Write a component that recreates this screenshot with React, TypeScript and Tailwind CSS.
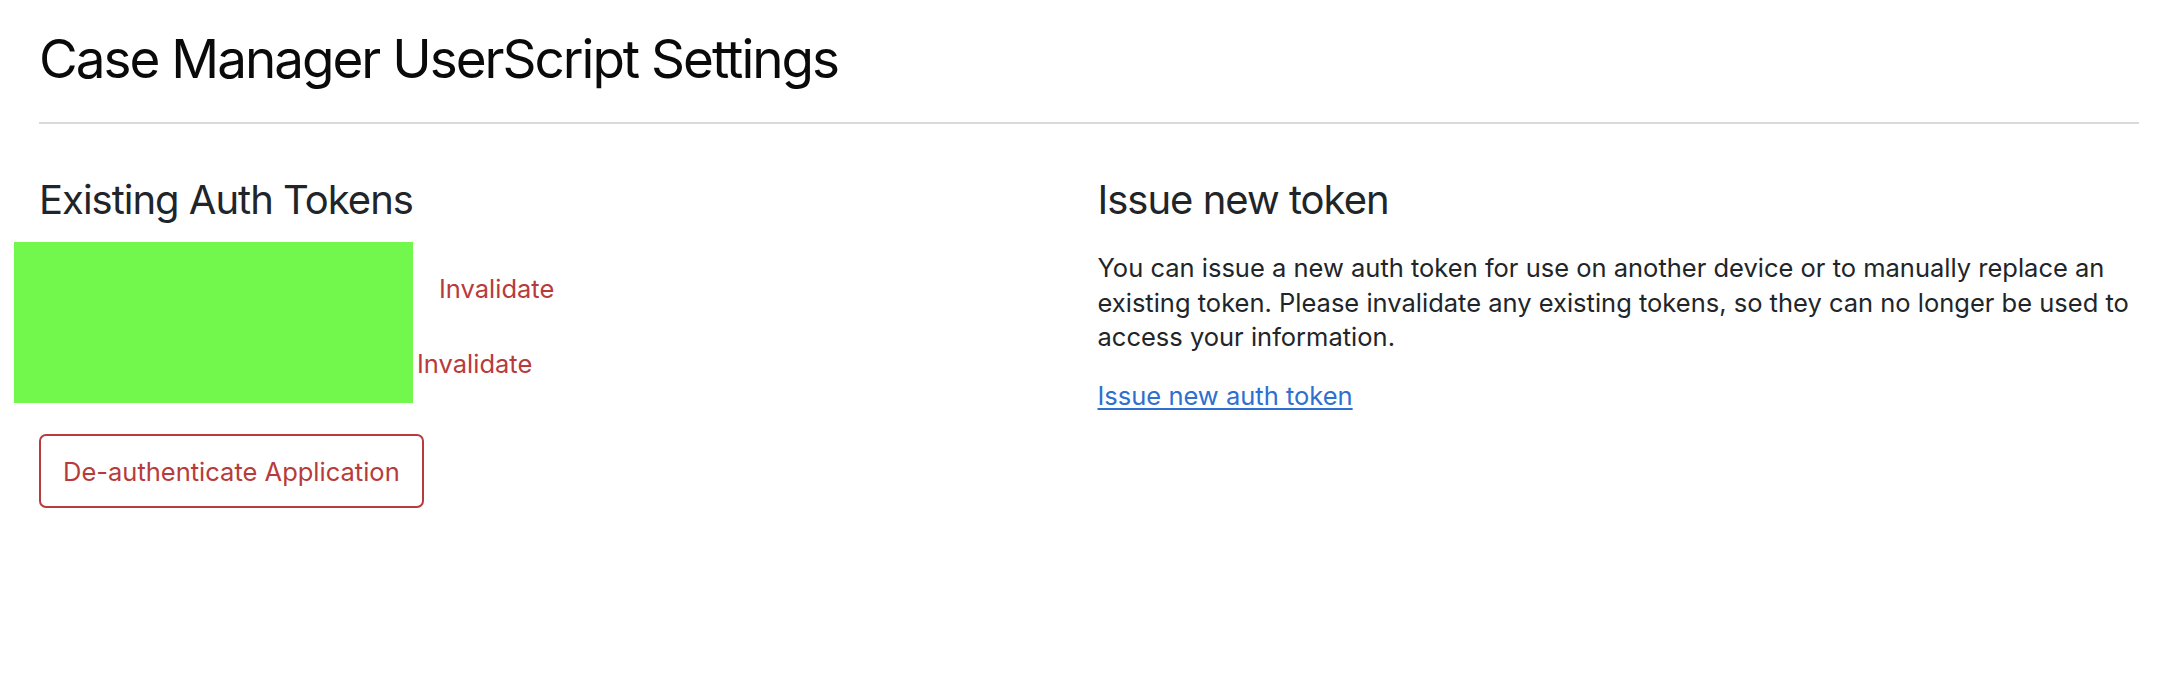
export default function App() {
  return (
    <div className="min-h-screen bg-white pl-[39px] pr-[37px] pt-[33px] font-['Inter',sans-serif] text-[#212529]">
      <h1 className="text-[53px] leading-none tracking-[-2px] text-[#0a0a0a]">Case Manager UserScript Settings</h1>
      <div className="mt-[36px] h-[2px] bg-[#dadada]" />

      <div className="grid grid-cols-2 gap-[17px] text-[25.5px] leading-[34.5px]">
        {/* Existing tokens */}
        <div>
          <h3 className="mt-[56px] text-[40px] leading-none tracking-[-1px]">Existing Auth Tokens</h3>
          <div className="relative mt-[22px] pt-[30px]">
            <div className="absolute left-[-25px] top-0 h-[161px] w-[399px] bg-[#72f74c]" />
            <div className="flex flex-col gap-[40.5px]">
              <div className="flex">
                <span className="w-[400px] shrink-0" />
                <a className="text-[#b83b3b]">Invalidate</a>
              </div>
              <div className="flex">
                <span className="w-[378px] shrink-0" />
                <a className="text-[#b83b3b]">Invalidate</a>
              </div>
            </div>
          </div>
          <button className="mt-[52px] flex h-[74px] items-center rounded-[7px] border-2 border-[#b83b3b] px-[22px] pt-[3px] text-[#b83b3b]">
            De-authenticate Application
          </button>
        </div>

        {/* Issue new token */}
        <div>
          <h3 className="mt-[56px] text-[40px] leading-none tracking-[-1px]">Issue new token</h3>
          <p className="mt-[31px]">
            You can issue a new auth token for use on another device or to manually replace an existing token.
            Please invalidate any existing tokens, so they can no longer be used to access your information.
          </p>
          <a className="mt-[24px] inline-block text-[#2e6fcf] underline decoration-2 underline-offset-[3px]">
            Issue new auth token
          </a>
        </div>
      </div>
    </div>
  )
}
